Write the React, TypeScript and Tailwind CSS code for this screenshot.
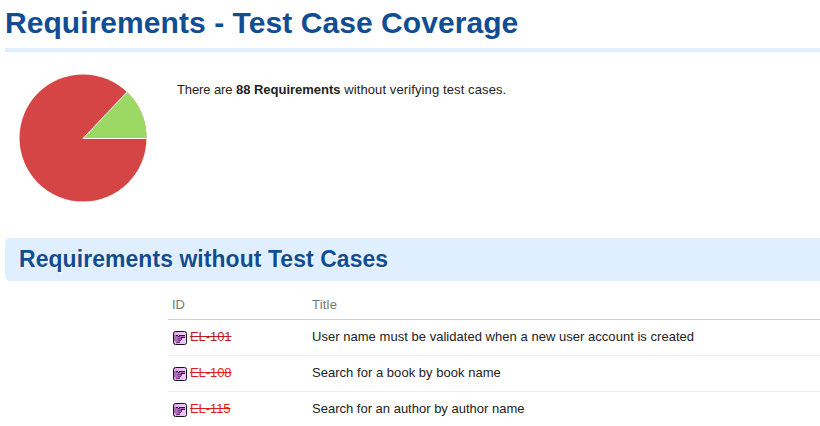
const rows = [
  {
    id: 'EL-101',
    title: 'User name must be validated when a new user account is created',
    color: 'text-[#b91c1f]',
    tracking: 'tracking-[0.033px]',
  },
  { id: 'EL-108', title: 'Search for a book by book name', color: 'text-[#e01b1b]', tracking: 'tracking-[0.033px]' },
  { id: 'EL-115', title: 'Search for an author by author name', color: 'text-[#e01b1b]', tracking: 'tracking-normal' },
];

function CoverageChart() {
  return (
    <svg className="block h-[130px] w-[130px]" viewBox="0 0 130 130">
      <circle cx="65" cy="65" r="63.5" fill="#d64545" />
      <path d="M65 65.5 L128.5 65.5 A63.5 63.5 0 0 0 109 18.9 Z" fill="#9bd864" />
      <path d="M129 65.5 H65 L109.3 18.7" fill="none" stroke="#fff" strokeWidth="1" />
    </svg>
  );
}

function RequirementIcon() {
  return (
    <svg className="block h-[14px] w-[14px] shrink-0" viewBox="0 0 14 14">
      <defs>
        <linearGradient id="tile" x1="0" y1="0" x2="1" y2="0">
          <stop offset="0" stopColor="#d8a4e4" />
          <stop offset="1" stopColor="#f6d0ff" />
        </linearGradient>
      </defs>
      <rect x="0.5" y="0.5" width="13" height="13" rx="2" fill="url(#tile)" stroke="#15101a" />
      <path d="M1 4 H4 L5 5 H12 V6 H9 V8 H8 V10 H7 V11 H4 L1 10 Z" fill="#b06abb" />
      <path d="M3 4.5 H5 M5 5.5 H6.5 M6 4.5 H12 M8 6.5 H12" fill="none" stroke="#32103b" />
      <path d="M5 7.5 H9 M5 9.5 H8 M3 11.5 H7 M8.5 7 V9" fill="none" stroke="#6b2c78" strokeWidth="0.9" />
    </svg>
  );
}

export default function App() {
  return (
    <main className="h-[426px] w-[820px] overflow-hidden bg-white pl-[5px] font-['Liberation_Sans',Arial,sans-serif] text-[13px] text-[#222]">
      <h1 className="h-[52px] border-b-4 border-[#e0efff] pt-[6px] text-[30px] leading-[34px] font-bold tracking-[0.06px] whitespace-nowrap text-[#104d92]">
        Requirements - Test Case Coverage
      </h1>
      <section className="flex h-[186px] pt-[21px] pl-[13px]">
        <CoverageChart />
        <p className="ml-[29px] pt-[9px] leading-[16px]">
          <span className="tracking-[-0.1px]">There are </span>
          <b className="tracking-[-0.02px]">88 Requirements</b>
          <span className="tracking-[0.11px]"> without verifying test cases.</span>
        </p>
      </section>
      <h2 className="h-[43px] rounded-l-[5px] bg-[#e0efff] pl-[14px] text-[23px] leading-[43px] font-bold tracking-[0.05px] whitespace-nowrap text-[#104d92] [text-shadow:1px_1px_0_#fff]">
        Requirements without Test Cases
      </h2>
      <div className="ml-[163px]">
        <div className="flex h-[39px] border-b border-[#d0d0d0] pt-[16px] pl-[4px] leading-[16px] text-[#777]">
          <span className="w-[140px]">ID</span>
          <span className="tracking-[0.2px]">Title</span>
        </div>
        {rows.map((row) => (
          <div key={row.id} className="flex h-[36px] border-b border-[#ededed] pt-[9px] pl-[4px] leading-[16px] whitespace-nowrap">
            <div className="flex w-[140px] pl-px">
              <div className="pt-[2px]">
                <RequirementIcon />
              </div>
              <span className={'ml-[3px] tracking-[-0.08px] line-through ' + row.color}>{row.id}</span>
            </div>
            <span className={row.tracking}>{row.title}</span>
          </div>
        ))}
      </div>
    </main>
  );
}
